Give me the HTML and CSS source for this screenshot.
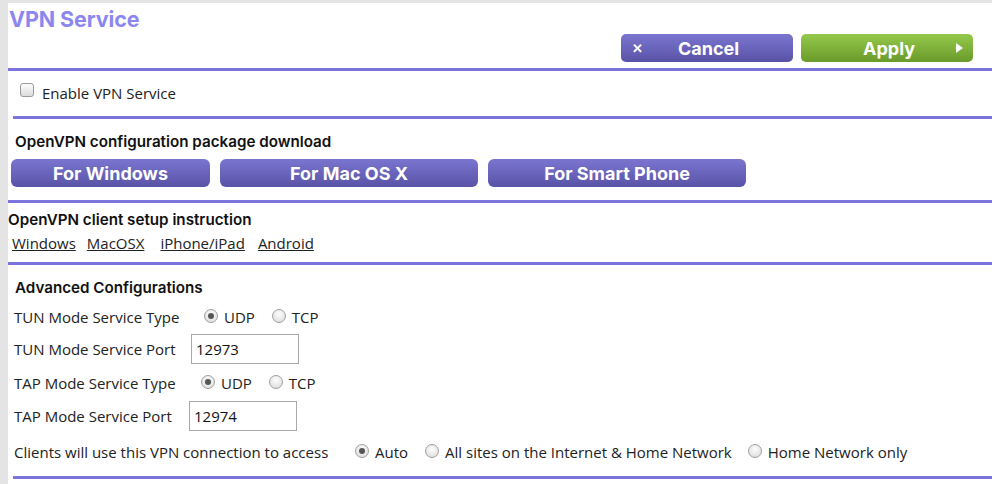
FILE: index.html
```html
<!DOCTYPE html>
<html>
<head>
<meta charset="utf-8">
<link rel="stylesheet" href="styles.css">
</head>
<body>
<div class="panel">
  <div class="header">
    <h1 class="title">VPN Service</h1>
    <div class="actions">
      <button class="btn btn-cancel"><span class="x">✕</span><span>Cancel</span></button>
      <button class="btn btn-apply"><span>Apply</span><span class="arrow"></span></button>
    </div>
  </div>
  <div class="sec sec-enable indent">
    <label class="check"><span class="box"></span>Enable VPN Service</label>
  </div>
  <div class="sec sec-download">
    <div class="heading h-download">OpenVPN configuration package download</div>
    <div class="dl-buttons">
      <button class="dl dl-win">For Windows</button>
      <button class="dl dl-mac">For Mac OS X</button>
      <button class="dl dl-phone">For Smart Phone</button>
    </div>
  </div>
  <div class="sec sec-instr">
    <div class="heading">OpenVPN client setup instruction</div>
    <div class="links">
      <a class="lnk l1">Windows</a><a class="lnk l2">MacOSX</a><a class="lnk l3">iPhone/iPad</a><a class="lnk l4">Android</a>
    </div>
  </div>
  <div class="sec sec-adv indent">
    <div class="heading h-adv">Advanced Configurations</div>
    <div class="row r1">
      <span class="lbl lbl-tun">TUN Mode Service Type</span>
      <span class="radio on"></span><span class="rtxt">UDP</span>
      <span class="radio"></span><span class="rtxt">TCP</span>
    </div>
    <div class="row r2">
      <span class="lbl lbl-tunp">TUN Mode Service Port</span>
      <span class="input in1">12973</span>
    </div>
    <div class="row r3">
      <span class="lbl lbl-tap">TAP Mode Service Type</span>
      <span class="radio on"></span><span class="rtxt">UDP</span>
      <span class="radio"></span><span class="rtxt">TCP</span>
    </div>
    <div class="row r4">
      <span class="lbl lbl-tapp">TAP Mode Service Port</span>
      <span class="input in2">12974</span>
    </div>
    <div class="row r5">
      <span class="lbl lbl-cl">Clients will use this VPN connection to access</span>
      <span class="radio on"></span><span class="rtxt t-auto">Auto</span>
      <span class="radio"></span><span class="rtxt t-all">All sites on the Internet &amp; Home Network</span>
      <span class="radio"></span><span class="rtxt">Home Network only</span>
    </div>
  </div>
</div>
</body>
</html>
```
FILE: styles.css
```css
html, body { margin: 0; padding: 0; }
body {
  background: #e4e4e4;
  font-family: "Open Sans", "Noto Sans", sans-serif;
  color: #222;
  width: 992px;
  height: 484px;
  overflow: hidden;
}
.panel {
  margin: 3px 0 0 8px;
  background: #fff;
  height: 481px;
}
.header {
  height: 65px;
  border-bottom: 3px solid #7a74dc;
  position: relative;
}
.title {
  margin: 0;
  padding: 3px 0 0 1px;
  font-family: "Inter", sans-serif;
  font-weight: 700;
  font-size: 21.5px;
  line-height: 26px;
  color: #8c87ef;
  letter-spacing: -0.1px;
}
.actions {
  display: flex;
  gap: 8px;
  margin: 2px 0 0 613px;
}
.btn {
  width: 172px;
  height: 28px;
  border: none;
  border-radius: 5px;
  color: #fff;
  font-family: "Inter", sans-serif;
  font-weight: 700;
  font-size: 18px;
  display: flex;
  align-items: center;
  padding: 0;
}
.btn-cancel {
  background: linear-gradient(#7a75cf, #5953a7);
}
.btn-cancel .x { font-size: 13px; margin: 0 0 0 11px; width: 46px; text-align: left; }
.btn-apply {
  background: linear-gradient(#95c94c, #6a9a2b);
  justify-content: flex-start;
}
.btn-apply span:first-child { margin-left: 62px; }
.btn-apply .arrow {
  width: 0; height: 0;
  border-left: 7px solid #fff;
  border-top: 5px solid transparent;
  border-bottom: 5px solid transparent;
  margin-left: 41px;
}
.sec { border-bottom: 3px solid #7a74dc; }
.indent { margin-left: 5px; }
.sec-enable { height: 45px; }
.check {
  display: flex;
  align-items: center;
  font-size: 15px;
  padding: 12px 0 0 7px;
  line-height: 20px;
}
.box {
  width: 12px; height: 12px;
  border: 1px solid #9a9a9a;
  border-radius: 3px;
  background: linear-gradient(#fcfcfc, #dcdcdc);
  margin: -6px 8px 0 0;
}
.heading {
  font-family: "Inter", sans-serif;
  font-weight: 600;
  font-size: 15.2px;
  line-height: 20px;
  color: #111;
}
.sec-download { height: 81px; }
.h-download { padding: 13px 0 0 7px; }
.dl-buttons { display: flex; gap: 10px; margin: 7px 0 0 3px; }
.dl {
  height: 28px;
  border: none;
  border-radius: 6px;
  background: linear-gradient(#7a75cf, #5953a7);
  color: #fff;
  font-family: "Inter", sans-serif;
  font-weight: 700;
  font-size: 18px;
  padding: 0;
}
.dl-win { width: 199px; }
.dl-mac { width: 258px; }
.dl-phone { width: 258px; }
.sec-instr { height: 59px; }
.sec-instr .heading { padding-top: 7px; }
.links { display: flex; margin: 3px 0 0 4px; font-size: 15px; line-height: 20px; }
.lnk { text-decoration: underline; color: #222; }
.l1 { margin-right: 11px; }
.l2 { margin-right: 16px; }
.l3 { margin-right: 13px; }
.sec-adv { height: 211px; }
.h-adv { padding: 13px 0 0 2px; }
.row {
  display: flex;
  align-items: center;
  font-size: 15px;
  line-height: 20px;
  padding-left: 1px;
}
.r1 { margin-top: 8px; height: 22px; }
.r2 { margin-top: 6px; height: 30px; }
.r3 { margin-top: 8px; height: 22px; }
.r4 { margin-top: 7px; height: 30px; }
.r5 { margin-top: 10px; height: 22px; }
.lbl-tun { width: 190px; }
.lbl-tunp { width: 177px; }
.lbl-tap { width: 187px; }
.lbl-tapp { width: 175px; }
.lbl-cl { width: 341px; }
.radio {
  width: 12px; height: 12px;
  border: 1px solid #a0a0a0;
  border-radius: 50%;
  background: radial-gradient(circle at 50% 35%, #fdfdfd, #d8d8d8);
  margin: -3px 6px 0 0;
  position: relative;
  flex: none;
}
.radio.on::after {
  content: "";
  position: absolute;
  left: 3px; top: 3px;
  width: 6px; height: 6px;
  border-radius: 50%;
  background: #555;
}
.rtxt { margin-right: 17px; }
.t-auto { margin-right: 17px; }
.t-all { margin-right: 16px; }
.input {
  width: 102px;
  height: 28px;
  border: 1px solid #a9a9a9;
  font-size: 15px;
  line-height: 28px;
  padding-left: 4px;
  color: #111;
}
```
